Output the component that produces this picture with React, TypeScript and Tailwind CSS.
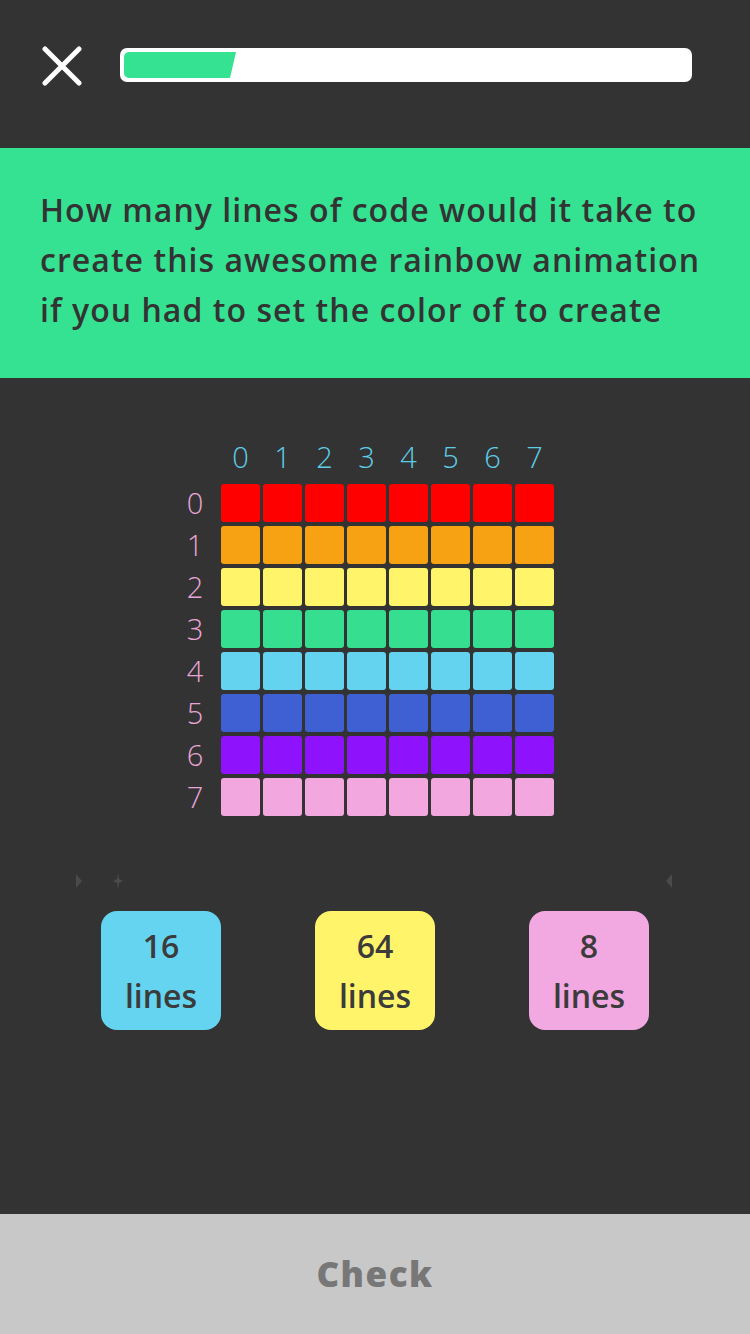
import React from "react";

const rows = ["#FF0000", "#F7A212", "#FFF46A", "#35DF8F", "#64D3EF", "#3F60D3", "#8E12FB", "#F2A8DF"];
const idx = [0, 1, 2, 3, 4, 5, 6, 7];

const answers = [
  { n: "16", bg: "bg-[#64D4F0]" },
  { n: "64", bg: "bg-[#FFF46A]" },
  { n: "8", bg: "bg-[#F2A8E0]" },
];

export default function App() {
  return (
    <div className="w-[750px] h-[1334px] bg-[#333333] flex flex-col" style={{ fontFamily: "'Open Sans', 'Noto Sans', sans-serif" }}>
      {/* top bar */}
      <div className="h-[148px] flex items-start pt-[46px] pl-[42px] pr-[58px] gap-[38px] shrink-0">
        <svg width="40" height="40" viewBox="0 0 40 40" className="shrink-0">
          <path d="M3 3 L37 37 M37 3 L3 37" stroke="#ffffff" strokeWidth="5" strokeLinecap="round" />
        </svg>
        <div className="flex-1 h-[34px] mt-[2px] bg-white rounded-[7px] p-[4px] flex">
          <svg width="112" height="26" viewBox="0 0 112 26" className="block">
            <path d="M5 0 H112 L106 26 H5 A5 5 0 0 1 0 21 V5 A5 5 0 0 1 5 0 Z" fill="#35E291" />
          </svg>
        </div>
      </div>

      {/* question */}
      <div className="h-[230px] bg-[#35E291] pl-[40px] pr-[10px] pt-[37px] shrink-0">
        <p className="text-[#333333] text-[32px] leading-[50px] font-semibold tracking-[1.05px] whitespace-nowrap">
          How many lines of code would it take to
          <br />
          create this awesome rainbow animation
          <br />
          if you had to set the color of to create
        </p>
      </div>

      {/* grid */}
      <div className="flex flex-col items-center pt-[57px] shrink-0">
        <div className="flex flex-col ml-[-25px]">
          <div className="flex pl-[50px] gap-[3px] h-[44px] mb-[5px]">
            {idx.map((i) => (
              <div key={i} className="w-[39px] text-center text-[29px] leading-[44px] font-light text-[#5ECDE8]">
                {i}
              </div>
            ))}
          </div>
          {rows.map((c, r) => (
            <div key={r} className="flex items-center mb-[4px]">
              <div className="w-[50px] text-[29px] leading-[38px] font-light text-[#E8A5D6] text-center pr-[2px]">{r}</div>
              <div className="flex gap-[3px]">
                {idx.map((i) => (
                  <div key={i} className="w-[39px] h-[38px] rounded-[3px]" style={{ backgroundColor: c }} />
                ))}
              </div>
            </div>
          ))}
        </div>
      </div>

      {/* faint decorations */}
      <div className="relative h-[86px] shrink-0">
        <svg className="absolute left-[75px] top-[54px]" width="8" height="14" viewBox="0 0 8 14">
          <path d="M1 0 L7 7 L1 14 Z" fill="#4a4a4a" />
        </svg>
        <svg className="absolute left-[113px] top-[53px]" width="10" height="16" viewBox="0 0 10 16">
          <path d="M5 0 L6 6 L10 8 L6 10 L5 16 L4 10 L0 8 L4 6 Z" fill="#4a4a4a" />
        </svg>
        <svg className="absolute left-[665px] top-[54px]" width="8" height="14" viewBox="0 0 8 14">
          <path d="M7 0 L1 7 L7 14 Z" fill="#4a4a4a" />
        </svg>
      </div>

      {/* answers */}
      <div className="flex justify-center gap-[94px] pt-[5px] shrink-0">
        {answers.map((a) => (
          <div key={a.n} className={`w-[120px] h-[119px] rounded-[16px] ${a.bg} flex flex-col items-center justify-center text-[#3B3B3B] text-[32px] leading-[50px] font-semibold`}>
            <span>{a.n}</span>
            <span>lines</span>
          </div>
        ))}
      </div>

      <div className="flex-1" />

      {/* check */}
      <div className="h-[120px] bg-[#C8C8C8] flex items-center justify-center shrink-0">
        <span className="text-[#777777] text-[35px] font-extrabold tracking-[1.5px]">
          Check
        </span>
      </div>
    </div>
  );
}
